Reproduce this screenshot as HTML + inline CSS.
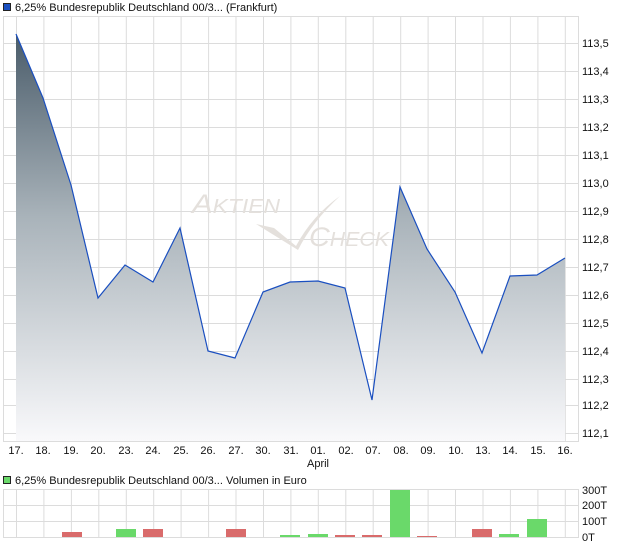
<!DOCTYPE html>
<html><head><meta charset="utf-8"><style>
body{margin:0;background:#fff;width:620px;height:546px;overflow:hidden;font-family:"Liberation Sans",sans-serif}
</style></head><body>
<svg width="620" height="546" xmlns="http://www.w3.org/2000/svg" font-family="Liberation Sans, sans-serif" font-size="11" fill="#111">
<defs>
<linearGradient id="g" x1="0" y1="34" x2="0" y2="441" gradientUnits="userSpaceOnUse">
<stop offset="0" stop-color="#4a5c6a"/><stop offset="0.45" stop-color="#a9b3ba"/><stop offset="1" stop-color="#f9f9fb"/></linearGradient>
</defs>
<rect x="3.5" y="3.5" width="7" height="7" fill="#1a4fc0" stroke="#222" stroke-width="1"/>
<text x="15" y="11">6,25% Bundesrepublik Deutschland 00/3... (Frankfurt)</text>
<g stroke="#dcdcdc" stroke-width="1" fill="none">
<rect x="3.5" y="16.5" width="575" height="425"/>
<path d="M16.5 16V441M43.9 16V441M71.4 16V441M98.8 16V441M126.3 16V441M153.7 16V441M181.1 16V441M208.6 16V441M236 16V441M263.5 16V441M290.9 16V441M318.3 16V441M345.8 16V441M373.2 16V441M400.7 16V441M428.1 16V441M455.5 16V441M483 16V441M510.4 16V441M537.9 16V441M565.3 16V441"/>
<path d="M3 43.5H578M3 71.5H578M3 99.5H578M3 127.5H578M3 155.5H578M3 183.5H578M3 211.5H578M3 239.5H578M3 267.5H578M3 295.5H578M3 323.5H578M3 351.5H578M3 379.5H578M3 405.5H578M3 433.5H578"/>
</g>
<g font-size="11" fill="#111">
<text x="582" y="47">113,5</text><text x="582" y="75">113,4</text><text x="582" y="103">113,3</text><text x="582" y="131">113,2</text><text x="582" y="159">113,1</text><text x="582" y="187">113,0</text><text x="582" y="215">112,9</text><text x="582" y="243">112,8</text><text x="582" y="271">112,7</text><text x="582" y="299">112,6</text><text x="582" y="327">112,5</text><text x="582" y="355">112,4</text><text x="582" y="383">112,3</text><text x="582" y="409">112,2</text><text x="582" y="437">112,1</text>
</g>
<g fill="#e4e0dc" font-style="italic">
<text x="192" y="213" font-size="27" textLength="88" lengthAdjust="spacingAndGlyphs">A<tspan font-size="20">KTIEN</tspan></text>
<text x="309" y="246" font-size="27" textLength="80" lengthAdjust="spacingAndGlyphs">C<tspan font-size="20">HECK</tspan></text>
<path d="M256 224 L274 228 L296 246 Q312 216 340 196 Q312 222 298 250 Z"/>
</g>
<path d="M16 34 L43 98 L71 185 L98 298 L125 265 L153 282 L180 228 L208 351 L235 358 L263 292 L290 282 L318 281 L345 288 L372 400 L400 187 L427 249 L455 292 L482 353 L510 276 L537 275 L565 258 L565 441 L16 441 Z" fill="url(#g)"/>
<path d="M16 34 L43 98 L71 185 L98 298 L125 265 L153 282 L180 228 L208 351 L235 358 L263 292 L290 282 L318 281 L345 288 L372 400 L400 187 L427 249 L455 292 L482 353 L510 276 L537 275 L565 258" fill="none" stroke="#1a4fc0" stroke-width="1.2"/>
<g text-anchor="middle" font-size="11">
<text x="16" y="454">17.</text><text x="43" y="454">18.</text><text x="71" y="454">19.</text><text x="98" y="454">20.</text><text x="126" y="454">23.</text><text x="153" y="454">24.</text><text x="181" y="454">25.</text><text x="208" y="454">26.</text><text x="236" y="454">27.</text><text x="263" y="454">30.</text><text x="291" y="454">31.</text><text x="318" y="454">01.</text><text x="346" y="454">02.</text><text x="373" y="454">07.</text><text x="401" y="454">08.</text><text x="428" y="454">09.</text><text x="456" y="454">10.</text><text x="483" y="454">13.</text><text x="510" y="454">14.</text><text x="538" y="454">15.</text><text x="565" y="454">16.</text>
<text x="318" y="467">April</text>
</g>
<rect x="3.5" y="476.5" width="7" height="7" fill="#6ad96a" stroke="#222" stroke-width="1"/>
<text x="15" y="484">6,25% Bundesrepublik Deutschland 00/3... Volumen in Euro</text>
<g stroke="#dcdcdc" stroke-width="1" fill="none">
<rect x="3.5" y="489.5" width="575" height="48"/>
<path d="M16.5 489V537M43.9 489V537M71.4 489V537M98.8 489V537M126.3 489V537M153.7 489V537M181.1 489V537M208.6 489V537M236 489V537M263.5 489V537M290.9 489V537M318.3 489V537M345.8 489V537M373.2 489V537M400.7 489V537M428.1 489V537M455.5 489V537M483 489V537M510.4 489V537M537.9 489V537M565.3 489V537"/>
<path d="M3 505.5H578M3 521.5H578"/>
</g>
<g>
<rect x="62" y="532" width="20" height="5" fill="#d96b6b"/>
<rect x="116" y="529" width="20" height="8" fill="#6ad96a"/>
<rect x="143" y="529" width="20" height="8" fill="#d96b6b"/>
<rect x="226" y="529" width="20" height="8" fill="#d96b6b"/>
<rect x="280" y="535" width="20" height="2" fill="#6ad96a"/>
<rect x="308" y="534" width="20" height="3" fill="#6ad96a"/>
<rect x="335" y="535" width="20" height="2" fill="#d96b6b"/>
<rect x="362" y="535" width="20" height="2" fill="#d96b6b"/>
<rect x="390" y="490" width="20" height="47" fill="#6ad96a"/>
<rect x="417" y="536" width="20" height="1" fill="#d96b6b"/>
<rect x="472" y="529" width="20" height="8" fill="#d96b6b"/>
<rect x="499" y="534" width="20" height="3" fill="#6ad96a"/>
<rect x="527" y="519" width="20" height="18" fill="#6ad96a"/>
</g>
<g font-size="11">
<text x="582" y="494">300T</text><text x="582" y="509">200T</text><text x="582" y="525">100T</text><text x="582" y="541">0T</text>
</g>
</svg>
</body></html>
